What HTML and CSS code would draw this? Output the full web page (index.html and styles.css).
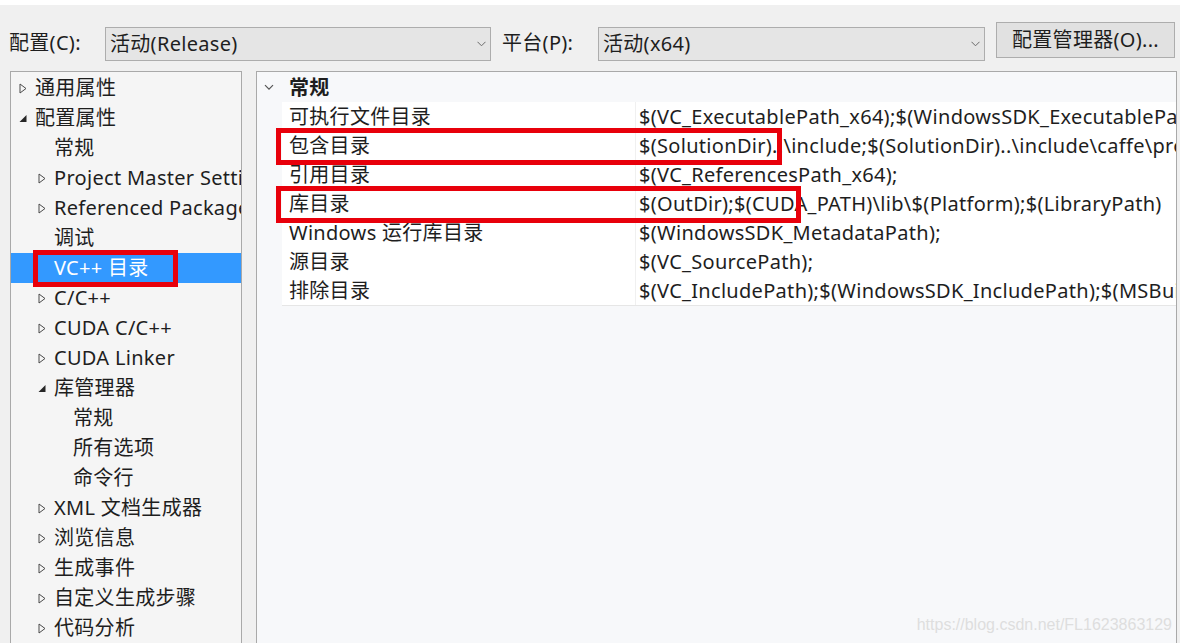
FILE: index.html
```html
<!DOCTYPE html>
<html lang="zh-CN">
<head>
<meta charset="utf-8">
<link rel="stylesheet" href="styles.css">
</head>
<body>
<div class="page">
  <div class="topstrip"></div>
  <div class="toolbar">
    <div class="label">配置(C):</div>
    <div class="combo combo-config">
      <span class="combo-text">活动(Release)</span>
      <svg class="combo-arrow" width="9" height="6" viewBox="0 0 9 6"><path d="M0.5 0.8 L4.5 4.8 L8.5 0.8" fill="none" stroke="#6a6a6a" stroke-width="1"/></svg>
    </div>
    <div class="label label-platform">平台(P):</div>
    <div class="combo combo-platform">
      <span class="combo-text">活动(x64)</span>
      <svg class="combo-arrow" width="9" height="6" viewBox="0 0 9 6"><path d="M0.5 0.8 L4.5 4.8 L8.5 0.8" fill="none" stroke="#6a6a6a" stroke-width="1"/></svg>
    </div>
    <div class="button">配置管理器(O)...</div>
  </div>

  <div class="main">
    <div class="tree">
      <div class="node lvl0"><span class="tw"><svg width="8" height="11" viewBox="0 0 8 11"><path d="M1 1 L7 5.5 L1 10 Z" fill="none" stroke="#4a4a4a" stroke-width="1"/></svg></span>通用属性</div>
      <div class="node lvl0"><span class="tw"><svg width="8" height="11" viewBox="0 0 8 11"><path d="M7.5 2 L7.5 9 L0.5 9 Z" fill="#262626"/></svg></span>配置属性</div>
      <div class="node lvl1"><span class="tw"></span>常规</div>
      <div class="node lvl1"><span class="tw"><svg width="8" height="11" viewBox="0 0 8 11"><path d="M1 1 L7 5.5 L1 10 Z" fill="none" stroke="#4a4a4a" stroke-width="1"/></svg></span>Project Master Settings</div>
      <div class="node lvl1"><span class="tw"><svg width="8" height="11" viewBox="0 0 8 11"><path d="M1 1 L7 5.5 L1 10 Z" fill="none" stroke="#4a4a4a" stroke-width="1"/></svg></span>Referenced Packages</div>
      <div class="node lvl1"><span class="tw"></span>调试</div>
      <div class="node lvl1 selected"><span class="tw"></span>VC++ 目录</div>
      <div class="node lvl1"><span class="tw"><svg width="8" height="11" viewBox="0 0 8 11"><path d="M1 1 L7 5.5 L1 10 Z" fill="none" stroke="#4a4a4a" stroke-width="1"/></svg></span>C/C++</div>
      <div class="node lvl1"><span class="tw"><svg width="8" height="11" viewBox="0 0 8 11"><path d="M1 1 L7 5.5 L1 10 Z" fill="none" stroke="#4a4a4a" stroke-width="1"/></svg></span>CUDA C/C++</div>
      <div class="node lvl1"><span class="tw"><svg width="8" height="11" viewBox="0 0 8 11"><path d="M1 1 L7 5.5 L1 10 Z" fill="none" stroke="#4a4a4a" stroke-width="1"/></svg></span>CUDA Linker</div>
      <div class="node lvl1"><span class="tw"><svg width="8" height="11" viewBox="0 0 8 11"><path d="M7.5 2 L7.5 9 L0.5 9 Z" fill="#262626"/></svg></span>库管理器</div>
      <div class="node lvl2"><span class="tw"></span>常规</div>
      <div class="node lvl2"><span class="tw"></span>所有选项</div>
      <div class="node lvl2"><span class="tw"></span>命令行</div>
      <div class="node lvl1"><span class="tw"><svg width="8" height="11" viewBox="0 0 8 11"><path d="M1 1 L7 5.5 L1 10 Z" fill="none" stroke="#4a4a4a" stroke-width="1"/></svg></span>XML 文档生成器</div>
      <div class="node lvl1"><span class="tw"><svg width="8" height="11" viewBox="0 0 8 11"><path d="M1 1 L7 5.5 L1 10 Z" fill="none" stroke="#4a4a4a" stroke-width="1"/></svg></span>浏览信息</div>
      <div class="node lvl1"><span class="tw"><svg width="8" height="11" viewBox="0 0 8 11"><path d="M1 1 L7 5.5 L1 10 Z" fill="none" stroke="#4a4a4a" stroke-width="1"/></svg></span>生成事件</div>
      <div class="node lvl1"><span class="tw"><svg width="8" height="11" viewBox="0 0 8 11"><path d="M1 1 L7 5.5 L1 10 Z" fill="none" stroke="#4a4a4a" stroke-width="1"/></svg></span>自定义生成步骤</div>
      <div class="node lvl1"><span class="tw"><svg width="8" height="11" viewBox="0 0 8 11"><path d="M1 1 L7 5.5 L1 10 Z" fill="none" stroke="#4a4a4a" stroke-width="1"/></svg></span>代码分析</div>
      <div class="mark mark-tree"></div>
    </div>

    <div class="props">
      <div class="cat">
        <svg class="cat-chev" width="10" height="7" viewBox="0 0 10 7"><path d="M1 1.2 L5 5.2 L9 1.2" fill="none" stroke="#555" stroke-width="1.2"/></svg>
        <span class="cat-name">常规</span>
      </div>
      <div class="rows">
        <div class="row"><div class="name">可执行文件目录</div><div class="val">$(VC_ExecutablePath_x64);$(WindowsSDK_ExecutablePath);$(VS_ExecutablePath);</div></div>
        <div class="row"><div class="name">包含目录</div><div class="val">$(SolutionDir)..\include;$(SolutionDir)..\include\caffe\proto;$(IncludePath)</div></div>
        <div class="row"><div class="name">引用目录</div><div class="val">$(VC_ReferencesPath_x64);</div></div>
        <div class="row"><div class="name">库目录</div><div class="val">$(OutDir);$(CUDA_PATH)\lib\$(Platform);$(LibraryPath)</div></div>
        <div class="row"><div class="name">Windows 运行库目录</div><div class="val">$(WindowsSDK_MetadataPath);</div></div>
        <div class="row"><div class="name">源目录</div><div class="val">$(VC_SourcePath);</div></div>
        <div class="row"><div class="name">排除目录</div><div class="val">$(VC_IncludePath);$(WindowsSDK_IncludePath);$(MSBuild_ExecutablePath);</div></div>
      </div>
      <div class="mark mark-include"></div>
      <div class="mark mark-lib"></div>
      <div class="watermark">https://blog.csdn.net/FL1623863129</div>
    </div>
  </div>
</div>
</body>
</html>
```

FILE: styles.css
```css
* { box-sizing: border-box; }
html, body { margin: 0; padding: 0; }
body {
  width: 1180px;
  height: 643px;
  overflow: hidden;
  background: #f0f0f0;
  font-family: "Noto Sans", "Noto Sans CJK SC", sans-serif;
  font-size: 20px;
  letter-spacing: 0.3px;
  color: #1e1e1e;
}
.page { width: 1180px; height: 643px; display: flex; flex-direction: column; }
.topstrip { height: 5px; background: #ffffff; flex: none; }

.toolbar {
  flex: none;
  height: 66px;
  display: flex;
  align-items: flex-start;
  padding-left: 9px;
  padding-top: 17px;
}
.label {
  width: 96px;
  height: 34px;
  margin-top: 5px;
  line-height: 32px;
  white-space: nowrap;
}
.label-platform { margin-left: 11px; }
.combo {
  height: 34px;
  margin-top: 5px;
  background: #e5e5e5;
  border: 1px solid #adadad;
  display: flex;
  align-items: center;
  justify-content: space-between;
  padding: 0 4px 0 4px;
}
.combo-config { width: 386px; }
.combo-platform { width: 387px; }
.combo-text { line-height: 32px; white-space: nowrap; }
.combo-arrow { flex: none; }
.button {
  margin-left: 11px;
  width: 179px;
  height: 36px;
  background: #e1e1e1;
  border: 1px solid #adadad;
  text-align: center;
  line-height: 33px;
  white-space: nowrap;
}

.main {
  flex: 1;
  display: flex;
  align-items: stretch;
  min-height: 0;
}
.tree {
  position: relative;
  margin-left: 10px;
  width: 232px;
  background: #f5f5f5;
  border: 1px solid #a9a9a9;
  border-bottom: none;
  padding-top: 1px;
  overflow: hidden;
}
.node {
  height: 30px;
  line-height: 30px;
  white-space: nowrap;
  display: flex;
  align-items: center;
  overflow: hidden;
}
.node.lvl0 { padding-left: 7px; }
.node.lvl1 { padding-left: 26px; }
.node.lvl2 { padding-left: 45px; }
.tw {
  width: 17px;
  flex: none;
  display: flex;
  align-items: center;
  padding-left: 1px;
}
.tw svg { display: block; }
.node.selected { background: #3399ff; color: #ffffff; }

.mark {
  position: absolute;
  border: 5px solid #e8000b;
  pointer-events: none;
}
.mark-tree { left: 22px; top: 178px; width: 145px; height: 37px; }

.props {
  position: relative;
  margin-left: 14px;
  width: 921px;
  background: #f7f8fa;
  border: 1px solid #a9a9a9;
  border-bottom: none;
  padding-top: 1px;
  overflow: hidden;
}
.cat {
  height: 29px;
  display: flex;
  align-items: center;
  padding-left: 7px;
}
.cat-chev { flex: none; display: block; }
.cat-name { margin-left: 15px; font-weight: bold; line-height: 29px; }
.rows {
  margin-left: 25px;
  background: #ffffff;
  border-bottom: 1px solid #e6e6e6;
}
.row {
  height: 29px;
  display: flex;
  white-space: nowrap;
}
.name {
  width: 354px;
  flex: none;
  padding-left: 7px;
  line-height: 29px;
  border-right: 1px solid #f0f0f0;
  overflow: hidden;
}
.val {
  padding-left: 3px;
  line-height: 29px;
  overflow: hidden;
}
.mark-include { left: 19px; top: 56px; width: 506px; height: 37px; }
.mark-lib { left: 19px; top: 114px; width: 525px; height: 37px; }

.watermark {
  position: absolute;
  right: 4px;
  bottom: 9px;
  font-family: "Liberation Sans", Arial, sans-serif;
  font-size: 16px;
  letter-spacing: 0;
  color: #dedede;
  white-space: nowrap;
}
```
